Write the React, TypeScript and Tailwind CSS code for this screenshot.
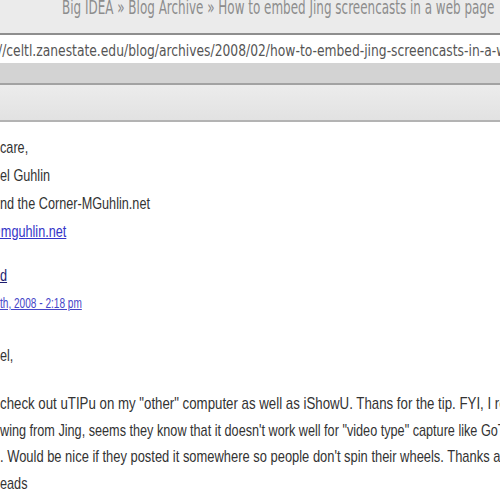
import React from "react";

const line = "whitespace-nowrap origin-left";

export default function App() {
  return (
    <div className="w-[500px] h-[500px] overflow-hidden bg-white" style={{ fontFamily: '"Liberation Sans", Arial, sans-serif' }}>
      {/* title bar */}
      <div className="h-[33px] bg-[#ebebeb] relative overflow-hidden">
        <div className={`${line} absolute left-[62px] top-[-5px] text-[19px] leading-[24px] text-[#8d8d8d] scale-x-[0.63]`} style={{ fontFamily: '"DejaVu Sans", sans-serif' }}>
          Big IDEA » Blog Archive » How to embed Jing screencasts in a web page
        </div>
      </div>
      <div className="h-[2px] bg-[#8e8e8e]" />
      {/* url field */}
      <div className="h-[28px] pt-[3px] bg-white flex items-center overflow-hidden">
        <div className={`${line} text-[16px] text-[#555] scale-x-[0.77] -ml-[2px]`} style={{ fontFamily: '"DejaVu Sans", sans-serif' }}>
          //celtl.zanestate.edu/blog/archives/2008/02/how-to-embed-jing-screencasts-in-a-web-page/
        </div>
      </div>
      <div className="h-[20px] bg-[#d3d3d3]" />
      <div className="h-[2px] bg-[#a2a2a2]" />
      <div className="h-[35px] bg-gradient-to-b from-[#ececec] to-[#e2e2e2]" />
      <div className="h-[2px] bg-[#b3b3b3]" />
      {/* page */}
      <div className="pt-[12px] text-[17px] text-[#333]">
        <div className="leading-[28px]">
          <div className={`${line} scale-x-[0.745]`}>care,</div>
          <div className={`${line} scale-x-[0.745]`}>el Guhlin</div>
          <div className={`${line} scale-x-[0.745]`}>nd the Corner-MGuhlin.net</div>
          <div className="overflow-hidden">
            <div className={`${line} scale-x-[0.745] -ml-[12px] text-[#3434c8] underline`}>@mguhlin.net</div>
          </div>
        </div>
        <div className="mt-[16px] leading-[27px]">
          <div className={`${line} scale-x-[0.745] text-[#1d1d70] underline`}>d</div>
        </div>
        <div className="mt-[1px] leading-[27px] text-[14px]">
          <div className={`${line} scale-x-[0.72] text-[#4646c8] underline`}>th, 2008 - 2:18 pm</div>
        </div>
        <div className="mt-[25px] leading-[27px]">
          <div className={`${line} scale-x-[0.745]`}>el,</div>
        </div>
        <div className="mt-[22px] leading-[26.5px]">
          <div className={`${line} scale-x-[0.78]`}>check out uTIPu on my "other" computer as well as iShowU. Thans for the tip. FYI, I received</div>
          <div className={`${line} scale-x-[0.745]`}>wing from Jing, seems they know that it doesn't work well for "video type" capture like GoToMeeting</div>
          <div className={`${line} scale-x-[0.76]`}>. Would be nice if they posted it somewhere so people don't spin their wheels. Thanks again</div>
          <div className={`${line} scale-x-[0.745]`}>eads</div>
        </div>
      </div>
    </div>
  );
}
